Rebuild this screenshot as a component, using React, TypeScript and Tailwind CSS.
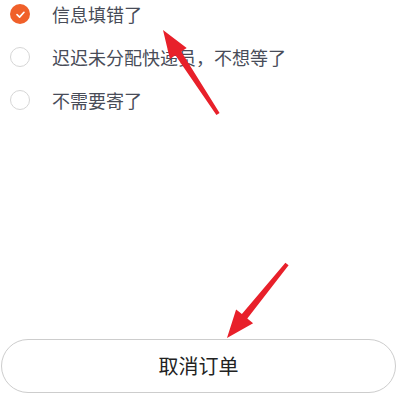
import React from "react"

const reasons = ["信息填错了", "迟迟未分配快递员，不想等了", "不需要寄了"]

function Radio({ checked }: { checked: boolean }) {
  if (checked) {
    return (
      <span className="flex h-5 w-5 shrink-0 items-center justify-center rounded-full bg-[#f0602a]">
        <svg width="11" height="11" viewBox="0 0 12 12" fill="none">
          <path d="M2.2 6.2 L5 8.8 L9.8 3.6" stroke="#fff" strokeWidth="1.8" strokeLinecap="round" strokeLinejoin="round" />
        </svg>
      </span>
    )
  }
  return <span className="h-5 w-5 shrink-0 rounded-full border-[1.5px] border-[#d6d6d6] bg-white" />
}

export default function App() {
  return (
    <div
      className="relative flex h-[403px] w-[400px] flex-col overflow-hidden bg-white"
      style={{ fontFamily: '"Noto Sans CJK SC", "Noto Sans", sans-serif' }}
    >
      {/* reasons list */}
      <div className="-mt-[7.5px] flex flex-col">
        {reasons.map((r, i) => (
          <div key={r} className="flex h-[43px] items-center gap-[22px] pl-[10px]">
            <Radio checked={i === 0} />
            <span className="text-[18px] leading-none text-[#484c58]">{r}</span>
          </div>
        ))}
      </div>

      <div className="flex-1" />

      {/* cancel button */}
      <div className="mb-[10px] pl-px">
        <button className="flex h-[54px] w-[395px] items-center justify-center rounded-full border-[1.5px] border-[#cdcdcd] bg-white text-[20px] text-[#222]">
          取消订单
        </button>
      </div>

      {/* annotation arrows */}
      <svg className="pointer-events-none absolute left-0 top-0" width="400" height="403">
        <polygon
          fill="#e8202a"
          points="219.6,113 181.2,51.5 186.7,47.9 163,30 169.9,58.9 175.4,55.3 216.4,115"
        />
        <polygon
          fill="#e8202a"
          points="288.6,265.2 247.3,318.5 253.1,323.2 227,338 236.1,309.4 241.9,314.1 285.4,262.8"
        />
      </svg>
    </div>
  )
}
